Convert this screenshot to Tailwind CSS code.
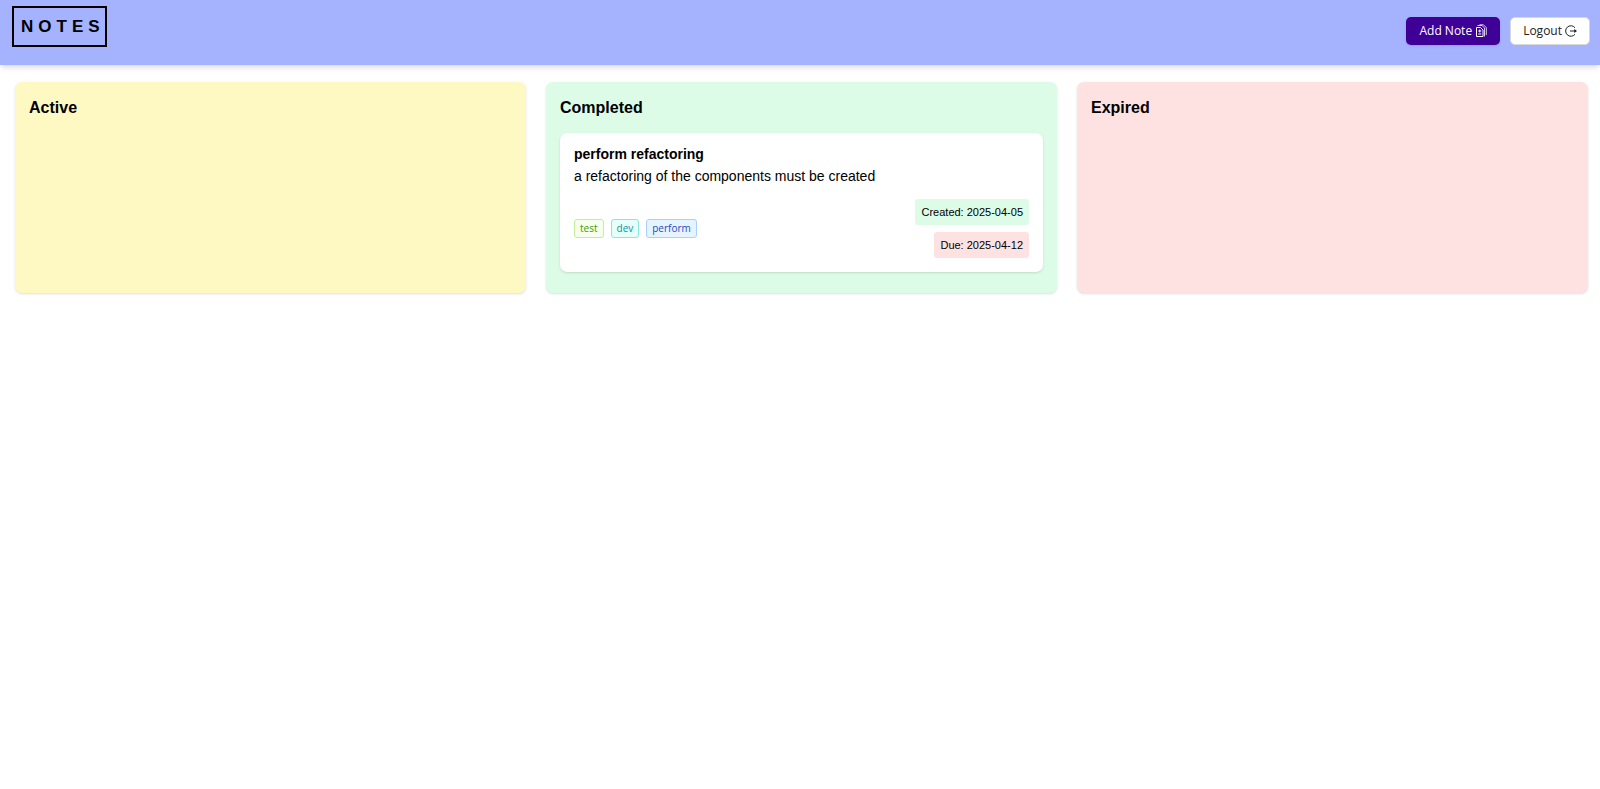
<!DOCTYPE html>
<html lang="en">
<head>
<meta charset="utf-8">
<title>Notes</title>
<script src="https://cdn.jsdelivr.net/npm/@tailwindcss/browser@4"></script>
</head>
<body class="min-h-screen bg-white font-['Liberation_Sans',Arial,sans-serif] text-black">
<header class="flex items-start justify-between bg-[#a5b3ff] pt-1.5 pr-2.5 pb-[18px] pl-3 shadow-md">
  <h1 class="border-2 border-black py-1.5 pl-[7px] text-[17px] leading-[25px] font-bold tracking-[5px]">NOTES</h1>
  <div class="flex gap-2.5 pt-[11px] font-['Open_Sans','Noto_Sans',sans-serif] text-xs">
    <button class="flex h-7 items-center gap-[3px] rounded-[5px] bg-[#3f0098] px-[13px] text-white shadow-sm">Add Note
      <svg class="h-3.5 w-3" viewBox="0 0 12 14" fill="none" stroke="currentColor" aria-hidden="true"><path d="M1.500 3.500h4l2.500 2.500v6.500h-6.500z"/><path d="M2.500 1.500h4.500l2.500 2.500v8.500M4.500 .8h4l2.800 2.800v7.500" stroke-width=".8"/><path d="M4.750 5.500v3M3.250 7h3M3.250 10h3"/></svg>
    </button>
    <button class="flex h-7 items-center gap-[3px] rounded-[5px] border border-[#d9d9d9] bg-white px-3 text-[#222]">Logout
      <svg class="size-3" viewBox="0 0 24 24" fill="none" stroke="currentColor" stroke-width="2" aria-hidden="true"><path d="M20 5.500A10.500 10.500 0 1 0 20 18.500M10 12h11"/><path d="M18.500 8l5.500 4-5.500 4z" fill="currentColor" stroke="none"/></svg>
    </button>
  </div>
</header>
<main class="grid grid-cols-3 gap-5 pt-[17px] pr-3 pl-[15px]">
  <section class="rounded-[7px] bg-[#fef9c2] p-3.5 shadow-sm">
    <h2 class="text-base leading-6 font-bold">Active</h2>
  </section>
  <section class="rounded-[7px] bg-[#dcfce7] px-3.5 pt-3.5 pb-[21px] shadow-sm">
    <h2 class="text-base leading-6 font-bold">Completed</h2>
    <article class="mt-[13px] rounded-[7px] bg-white p-3.5 shadow-sm">
      <h3 class="text-sm leading-[14px] font-bold">perform refactoring</h3>
      <p class="mt-1 text-sm leading-[22px]">a refactoring of the components must be created</p>
      <div class="mt-3 flex items-center justify-between">
        <ul class="flex gap-[7px] font-['Open_Sans','Noto_Sans',sans-serif] text-[10px] leading-[17px]">
          <li class="rounded-[3px] border border-[#c3ee99] bg-[#f6ffed] px-[5px] text-[#389e0d]">test</li>
          <li class="rounded-[3px] border border-[#87e8de] bg-[#e6fffb] px-[5px] text-[#08979c]">dev</li>
          <li class="rounded-[3px] border border-[#a5d0ff] bg-[#e6f4ff] px-[5px] text-[#1d4ec0]">perform</li>
        </ul>
        <div class="flex flex-col items-end gap-[7px] text-[11px] leading-[26px]">
          <p class="rounded-[3px] bg-[#dcfce7] px-1.5">Created: 2025-04-05</p>
          <p class="rounded-[3px] bg-[#fee2e2] px-1.5">Due: 2025-04-12</p>
        </div>
      </div>
    </article>
  </section>
  <section class="rounded-[7px] bg-[#fee2e2] p-3.5 shadow-sm">
    <h2 class="text-base leading-6 font-bold">Expired</h2>
  </section>
</main>
</body>
</html>
